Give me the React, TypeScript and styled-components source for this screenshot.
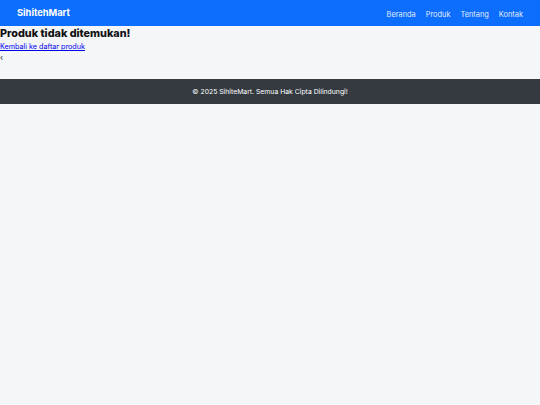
import styled, { createGlobalStyle } from "styled-components";

const GlobalStyle = createGlobalStyle`
  html, body {
    margin: 0;
    padding: 0;
    background: #f4f6f8;
    font-family: "Inter", "DejaVu Sans", sans-serif;
  }
`;

const Navbar = styled.nav`
  display: flex;
  justify-content: space-between;
  align-items: center;
  height: 26px;
  padding: 0 17px;
  background: #0d6efd;
`;

const Brand = styled.a`
  color: #fff;
  font-size: 9.3px;
  line-height: 12px;
  font-weight: 700;
  text-decoration: none;
`;

const NavList = styled.ul`
  display: flex;
  align-items: center;
  gap: 10px;
  margin: 0;
  padding: 0;
  list-style: none;
  line-height: 10px;
`;

const NavLink = styled.a`
  color: rgba(255, 255, 255, 0.9);
  font-size: 7.4px;
  text-decoration: none;
`;

const Main = styled.main`
  min-height: 53px;
`;

const Title = styled.h1`
  margin: 0;
  font-size: 10.8px;
  font-weight: 800;
  color: #111;
  line-height: 16px;
`;

const BackLink = styled.a`
  display: block;
  font-size: 7.2px;
  color: #0000ee;
  line-height: 10px;
`;

const Chevron = styled.div`
  font-size: 8px;
  color: #222;
  line-height: 10px;
`;

const Footer = styled.footer`
  display: flex;
  justify-content: center;
  align-items: center;
  height: 25px;
  background: #343a40;
  color: #fff;
  font-size: 6.85px;
`;

export default function App() {
  return (
    <>
      <GlobalStyle />
      <Navbar>
        <Brand href="#">SihitehMart</Brand>
        <NavList>
          <li><NavLink href="#">Beranda</NavLink></li>
          <li><NavLink href="#">Produk</NavLink></li>
          <li><NavLink href="#">Tentang</NavLink></li>
          <li><NavLink href="#">Kontak</NavLink></li>
        </NavList>
      </Navbar>
      <Main>
        <Title>Produk tidak ditemukan!</Title>
        <BackLink href="#">Kembali ke daftar produk</BackLink>
        <Chevron>‹</Chevron>
      </Main>
      <Footer>© 2025 SihiteMart. Semua Hak Cipta Dilindungi!</Footer>
    </>
  );
}
